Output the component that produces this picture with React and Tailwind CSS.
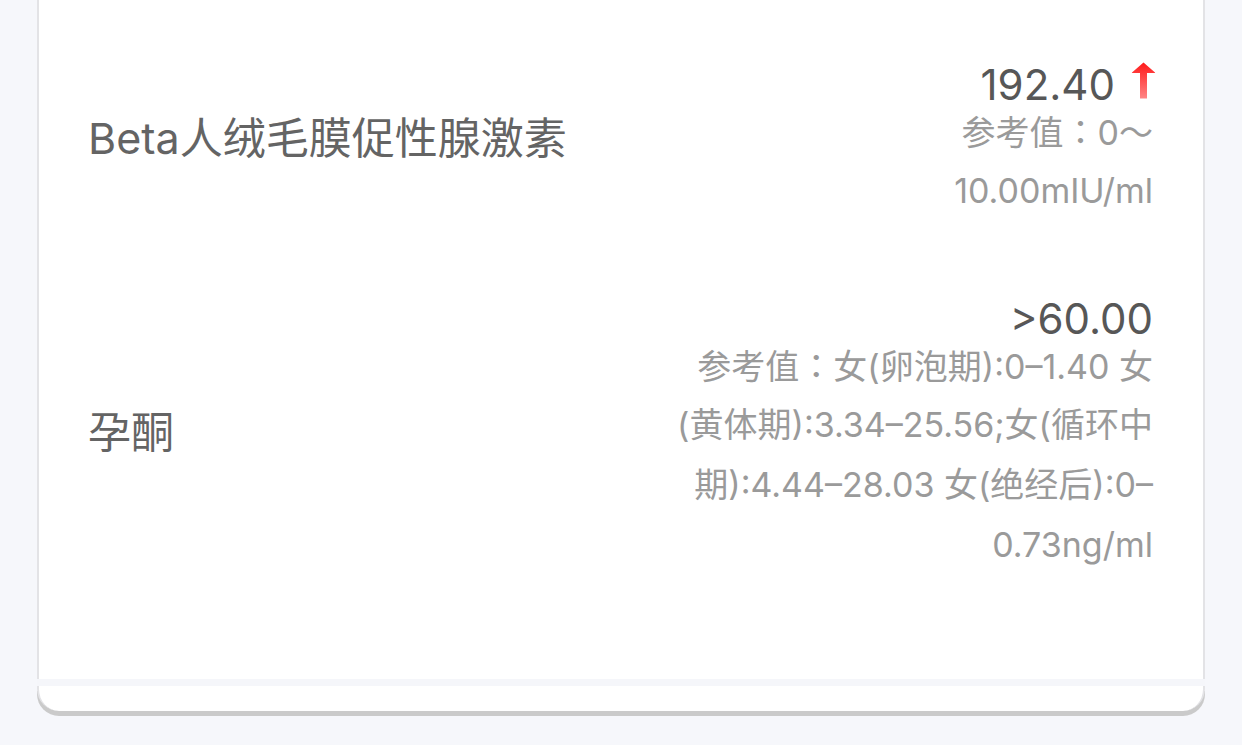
import React from 'react';

const items = [
    {
        name: 'Beta人绒毛膜促性腺激素',
        value: '192.40',
        high: true,
        ref: [['参考值', '0～'], ['', '10.00mIU/ml']],
    },
    {
        name: '孕酮',
        value: '>60.00',
        high: false,
        ref: [
            ['参考值', '女(卵泡期):0–1.40 女'],
            ['', '(黄体期):3.34–25.56;女(循环中'],
            ['', '期):4.44–28.03 女(绝经后):0–'],
            ['', '0.73ng/ml'],
        ],
    },
];

function UpArrow() {
    return (
        <svg width="25" height="37" viewBox="0 0 25 37" className="ml-[16px] mr-[-3px] mb-[2px] shrink-0">
            <defs>
                <linearGradient id="arrowRed" x1="0" y1="0" x2="0" y2="1">
                    <stop offset="0%" stopColor="#ff1a1a" />
                    <stop offset="100%" stopColor="#ff8585" />
                </linearGradient>
            </defs>
            <path d="M12.5 0.5 L24 10.5 Q24.5 11 23.5 11 L16 11 L16 36.5 L9 36.5 L9 11 L1.5 11 Q0.5 11 1 10.5 Z" fill="url(#arrowRed)" />
        </svg>
    );
}

export default function App() {
    return (
        <div className="min-h-[745px] w-full bg-[#f6f7fb] font-['Inter','Noto_Sans_CJK_SC',sans-serif]">
            <div className="ml-[37px] w-[1168px]">
                <div className="bg-white border-x-2 border-[#e3e3e6] pl-[49px] pr-[50px] pt-[28px] pb-[63px]">
                    {items.map((item) => (
                        <div key={item.name} className="flex items-center justify-between py-[41px]">
                            <div className="text-[43px] h-[50px] leading-[50px] text-[#646464] mb-[14px] whitespace-nowrap">{item.name}</div>
                            <div className="flex flex-col items-end text-right">
                                <div className="flex items-end h-[32px]">
                                    <span className="text-[42px] leading-[32px] text-[#575757]">{item.value}</span>
                                    {item.high && <UpArrow />}
                                </div>
                                {item.ref.map(([label, text]) => (
                                    <div key={text} className="h-[60px] text-[34px] leading-[60px] text-[#9a9a9a] whitespace-nowrap">
                                        {label && (
                                            <>
                                                {label}
                                                <span className="font-['Noto_Sans_CJK_TC',sans-serif]">：</span>
                                            </>
                                        )}
                                        {text}
                                    </div>
                                ))}
                            </div>
                        </div>
                    ))}
                </div>
                <div className="h-[7px] bg-[#f5f6fa]"></div>
                <div className="h-[25px] bg-white rounded-b-[22px] border-x-2 border-[#e3e3e6] shadow-[0_5px_0_#cacaca]"></div>
            </div>
        </div>
    );
}
